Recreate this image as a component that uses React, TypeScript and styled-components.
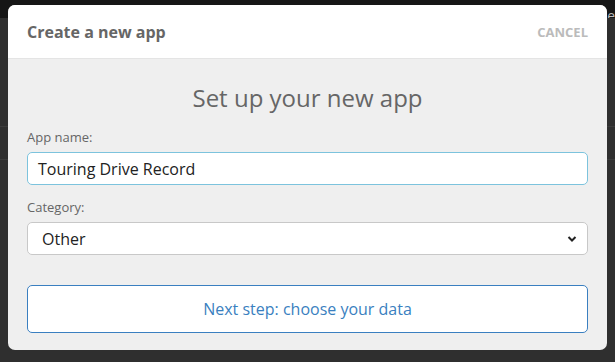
import styled, { createGlobalStyle } from 'styled-components'

const GlobalStyle = createGlobalStyle`
  html, body {
    margin: 0;
    padding: 0;
    width: 615px;
    height: 362px;
    overflow: hidden;
    background: #2e2e2e;
    font-family: 'Open Sans', 'Liberation Sans', sans-serif;
  }
`

const Page = styled.div`
  position: relative;
  width: 615px;
  height: 362px;
  background: #2f2f2f;
  overflow: hidden;
`

const TopBar = styled.div`
  height: 18px;
  background: #161616;
  display: flex;
  justify-content: flex-end;
  align-items: flex-end;
  gap: 14px;
  font-size: 14px;
  color: #bbb;
  line-height: 14px;
  overflow: hidden;
  span {
    transform: translateY(5px);
    white-space: nowrap;
  }
  .active {
    background: #1f3640;
    padding: 0 10px;
    color: #9cb;
  }
`

const BgRule = styled.div<{ $top: number }>`
  height: 1px;
  margin-top: ${(p) => p.$top}px;
  background: #3c3c3c;
`

const Modal = styled.div`
  position: absolute;
  left: 8px;
  top: 5px;
  width: 599px;
  height: 345px;
  border-radius: 7px;
  overflow: hidden;
  background: #efefef;
  display: flex;
  flex-direction: column;
`

const ModalHeader = styled.div`
  height: 53px;
  background: #fff;
  border-bottom: 1px solid #e4e4e4;
  display: flex;
  align-items: center;
  justify-content: space-between;
  padding: 0 19px;
`

const Title = styled.h2`
  margin: 0;
  font-size: 16px;
  font-weight: 700;
  color: #666;
`

const Cancel = styled.span`
  font-size: 13px;
  font-weight: 700;
  color: #bbb;
  letter-spacing: 0;
`

const Body = styled.div`
  padding: 24px 19px 0;
  display: flex;
  flex-direction: column;
`

const Heading = styled.h1`
  margin: 0 0 15px;
  text-align: center;
  font-size: 24px;
  font-weight: 400;
  color: #666;
  line-height: 30px;
`

const Label = styled.label`
  font-size: 13px;
  color: #666;
  line-height: 18px;
  margin-bottom: 6px;
`

const Field = styled.div<{ $focus?: boolean }>`
  height: 31px;
  background: #fff;
  border: 1px solid ${(p) => (p.$focus ? '#7cc3dd' : '#c8c8c8')};
  border-radius: 5px;
  display: flex;
  align-items: center;
  justify-content: space-between;
  padding: 0 10px;
  font-size: 16px;
  color: #222;
  margin-bottom: 13px;
`

const SelectText = styled.span`
  padding-left: 4px;
`

const NextButton = styled.button`
  margin-top: 17px;
  height: 48px;
  background: #fff;
  border: 1px solid #3a7fc0;
  border-radius: 5px;
  font-family: inherit;
  font-size: 16px;
  color: #3a7fc0;
`

const Chevron = () => (
  <svg width="10" height="8" viewBox="0 0 10 8">
    <path d="M1.5 2 L5 5.5 L8.5 2" fill="none" stroke="#222" strokeWidth="2" />
  </svg>
)

export default function App() {
  return (
    <Page>
      <GlobalStyle />
      <TopBar>
        <span>jmarcus@gmail.com</span>
        <span className="active">My apps</span>
        <span>My account</span>
        <span>|</span>
        <span>Sample</span>
      </TopBar>
      <BgRule $top={108} />
      <BgRule $top={32} />
      <Modal>
        <ModalHeader>
          <Title>Create a new app</Title>
          <Cancel>CANCEL</Cancel>
        </ModalHeader>
        <Body>
          <Heading>Set up your new app</Heading>
          <Label>App name:</Label>
          <Field $focus>Touring Drive Record</Field>
          <Label>Category:</Label>
          <Field>
            <SelectText>Other</SelectText>
            <Chevron />
          </Field>
          <NextButton>Next step: choose your data</NextButton>
        </Body>
      </Modal>
    </Page>
  )
}
